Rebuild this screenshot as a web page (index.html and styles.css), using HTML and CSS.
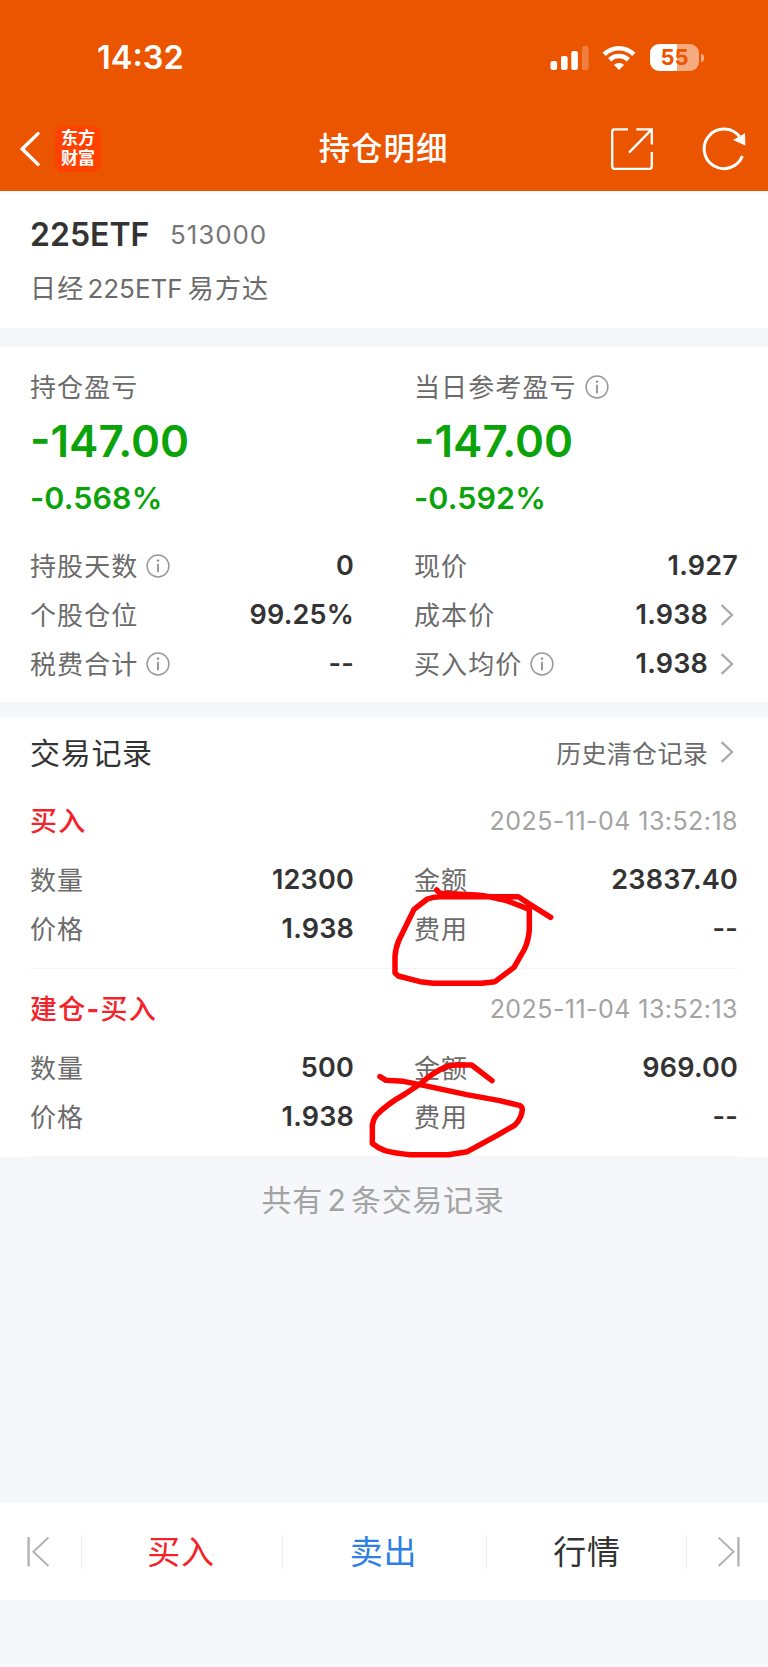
FILE: index.html
```html
<!DOCTYPE html>
<html lang="zh-CN">
<head>
<meta charset="UTF-8">
<meta name="viewport" content="width=device-width, initial-scale=1.0">
<title>持仓明细</title>
<link rel="stylesheet" href="styles.css">
</head>
<body>
<svg class="defs" width="0" height="0">
  <symbol id="info" viewBox="0 0 24 24">
    <circle cx="12" cy="12" r="10.9" fill="none" stroke="#999" stroke-width="1.5"/>
    <circle cx="12" cy="6.6" r="1.2" fill="#888"/>
    <path d="M12 9.8V18.2" stroke="#888" stroke-width="1.7"/>
  </symbol>
  <symbol id="more" viewBox="0 0 14 22">
    <path d="M1.6 1.2L12 11L1.6 20.8" fill="none" stroke="#aaa" stroke-width="2.3"/>
  </symbol>
</svg>

<div class="page">
  <header class="header">
    <div class="status">
      <span class="time">14:32</span>
      <div class="status-icons">
        <svg width="39" height="26" viewBox="0 0 39 26" fill="#fff">
          <rect x="0.5" y="16" width="6.6" height="9" rx="2"/>
          <rect x="11" y="11" width="6.6" height="14" rx="2"/>
          <rect x="21.3" y="6" width="6.6" height="19" rx="2"/>
          <rect x="32" y="1" width="6.6" height="24" rx="2" opacity=".25"/>
        </svg>
        <svg class="wifi" width="34" height="26" viewBox="0 0 34 26" fill="none" stroke="#fff" stroke-width="4.6">
          <path d="M2.2 9.4C10.5 1.1 23.5 1.1 31.8 9.4"/>
          <path d="M7.6 14.8C13 9.8 21 9.8 26.4 14.8"/>
          <path d="M17 25L12 20C15 17.4 19 17.4 22 20Z" fill="#fff" stroke="none"/>
        </svg>
        <div class="battery"><span>55</span></div>
        <i class="battery-cap"></i>
      </div>
    </div>
    <nav class="navbar">
      <div class="nav-side">
        <svg width="20" height="36" viewBox="0 0 20 36" fill="none" stroke="#fff" stroke-width="3.4" stroke-linecap="round">
          <path d="M18 2.6L2.3 18L18 33.4"/>
        </svg>
        <div class="logo">东方<br>财富</div>
      </div>
      <h1>持仓明细</h1>
      <div class="nav-side nav-right">
        <svg width="42" height="42" viewBox="0 0 42 42" fill="none" stroke="#fff" stroke-width="2.3">
          <path d="M17 1.3H3.5Q1.2 1.3 1.2 3.5V38.5Q1.2 40.8 3.5 40.8H38.5Q40.8 40.8 40.8 38.5V24"/>
          <path d="M25.3 1.3H40.8V16.5M40.2 1.9L18 24.6"/>
        </svg>
        <svg width="46" height="46" viewBox="0 0 46 46">
          <path d="M40.4 30A19.8 19.8 0 1 1 37.5 10.5" fill="none" stroke="#fff" stroke-width="3"/>
          <path d="M31 14L43 7.2L43.4 19.6Z" fill="#fff"/>
        </svg>
      </div>
    </nav>
  </header>

  <section class="stock">
    <div class="stock-line"><b>225ETF</b><span class="code">513000</span></div>
    <div class="stock-name">日经<span>225ETF</span>易方达</div>
  </section>

  <section class="summary">
    <div class="grid">
      <div class="col">
        <div class="label">持仓盈亏</div>
        <div class="profit">-147.00</div>
        <div class="rate">-0.568%</div>
      </div>
      <div class="col">
        <div class="label">当日参考盈亏<svg class="info"><use href="#info"/></svg></div>
        <div class="profit">-147.00</div>
        <div class="rate">-0.592%</div>
      </div>
    </div>
    <div class="grid rows">
      <div class="row"><span class="label">持股天数<svg class="info"><use href="#info"/></svg></span><b>0</b></div>
      <div class="row"><span class="label">现价</span><b>1.927</b></div>
      <div class="row"><span class="label">个股仓位</span><b>99.25%</b></div>
      <div class="row"><span class="label">成本价</span><b>1.938<svg class="more"><use href="#more"/></svg></b></div>
      <div class="row"><span class="label">税费合计<svg class="info"><use href="#info"/></svg></span><b>--</b></div>
      <div class="row"><span class="label">买入均价<svg class="info"><use href="#info"/></svg></span><b>1.938<svg class="more"><use href="#more"/></svg></b></div>
    </div>
  </section>

  <section class="records">
    <div class="records-head">
      <h2>交易记录</h2>
      <a class="history">历史清仓记录<svg class="more"><use href="#more"/></svg></a>
    </div>
    <div class="record">
      <div class="record-head"><strong>买入</strong><time>2025-11-04 13:52:18</time></div>
      <div class="grid rows">
        <div class="row"><span class="label">数量</span><b>12300</b></div>
        <div class="row"><span class="label">金额</span><b>23837.40</b></div>
        <div class="row"><span class="label">价格</span><b>1.938</b></div>
        <div class="row"><span class="label">费用</span><b>--</b></div>
      </div>
    </div>
    <div class="record record-open">
      <div class="record-head"><strong>建仓<b>-</b>买入</strong><time>2025-11-04 13:52:13</time></div>
      <div class="grid rows">
        <div class="row"><span class="label">数量</span><b>500</b></div>
        <div class="row"><span class="label">金额</span><b>969.00</b></div>
        <div class="row"><span class="label">价格</span><b>1.938</b></div>
        <div class="row"><span class="label">费用</span><b>--</b></div>
      </div>
    </div>
    <!-- pen marks drawn over the fee fields -->
    <svg class="marks" viewBox="0 0 1284 1020">
      <path d="M290 150L300 160L410 165Q450 169 500 182L568 208V270Q565 305 552 330L522 382L465 425L425 430H280L240 425L175 408L165 399V350Q167 322 177 300L222 208L262 177Q280 170 300 170H535L565 190L632 232"/>
      <path d="M120 710L138 721L190 724L240 734L380 764L475 781L538 796Q547 800 547 808Q546 832 525 855L470 887L382 935L325 944H210Q165 940 135 932Q112 923 97 910V855Q100 836 110 825Q140 793 195 762L240 732Q285 693 320 680Q335 675 350 675H395L456 722"/>
    </svg>
  </section>

  <p class="total">共有<span>2</span>条交易记录</p>

  <footer class="toolbar">
    <div class="step">
      <svg width="24" height="32" viewBox="0 0 24 32" fill="none" stroke="#b3b3b3" stroke-width="2">
        <path d="M2.6 1V30.4" stroke-width="2.4"/><path d="M22.4 1.6L7.4 15.8L22.4 30"/>
      </svg>
    </div>
    <div class="action buy">买入</div>
    <div class="action sell">卖出</div>
    <div class="action quote">行情</div>
    <div class="step">
      <svg width="24" height="32" viewBox="0 0 24 32" fill="none" stroke="#b3b3b3" stroke-width="2">
        <path d="M21.4 1V30.4" stroke-width="2.4"/><path d="M1.6 1.6L16.6 15.8L1.6 30"/>
      </svg>
    </div>
  </footer>
</div>
</body>
</html>
```

FILE: styles.css
```css
* {
    box-sizing: border-box;
}
body {
    margin: 0;
    background: #f6f7fa;
    color: #333;
    font-family: Inter, "Noto Sans CJK SC", sans-serif;
    font-size: 26px;
}
h1, h2, p {
    margin: 0;
}
svg {
    flex: none;
}
.defs {
    position: absolute;
}
.page {
    display: flex;
    flex-direction: column;
    width: 768px;
    height: 1667px;
}

/* header */
.header {
    height: 191px;
    background: #eb5500;
    color: #fff;
}
.status {
    display: flex;
    justify-content: space-between;
    height: 106px;
    padding: 37px 64px 0 97px;
}
.time {
    font-size: 32.5px;
    font-weight: 600;
    line-height: 41px;
}
.status-icons {
    display: flex;
    height: 41px;
    align-items: center;
}
.wifi {
    margin: 0 14px 0 13px;
}
.battery {
    width: 49px;
    height: 27px;
    border-radius: 9px;
    background: linear-gradient(90deg, #fff 55%, #f5aa80 55%);
    color: #eb5500;
    font-size: 22px;
    font-weight: 700;
    line-height: 27px;
    text-align: center;
}
.battery-cap {
    width: 3px;
    height: 8px;
    margin-left: 2px;
    border-radius: 0 4px 4px 0;
    background: #f5aa80;
}
.navbar {
    display: flex;
    align-items: center;
    justify-content: space-between;
    height: 85px;
    padding: 0 20px;
}
.nav-side {
    display: flex;
    align-items: center;
    gap: 15px;
    width: 160px;
}
.nav-right {
    justify-content: flex-end;
    gap: 49px;
}
.logo {
    width: 46px;
    height: 46px;
    padding-top: 2px;
    border-radius: 8px;
    background: #ff4200;
    font-size: 17px;
    font-weight: 700;
    line-height: 20px;
    text-align: center;
}
.navbar h1 {
    padding: 0 1px 5px 0;
    font-size: 31.5px;
    font-weight: 500;
    letter-spacing: 0.9px;
}

/* stock name */
.stock {
    height: 137px;
    padding: 21px 30px;
    background: #fff;
}
.stock-line {
    display: flex;
    align-items: center;
    height: 44px;
}
.stock-line b {
    width: 140px;
    font-size: 32px;
    font-weight: 600;
}
.code {
    color: #777;
    letter-spacing: 0.9px;
}
.stock-name {
    margin-top: 12px;
    color: #6b6b6b;
    line-height: 42px;
    letter-spacing: 1.2px;
}
.stock-name span {
    margin: 0 5px 0 3px;
    letter-spacing: 0;
}

/* profit summary */
.summary {
    height: 355px;
    margin-top: 19px;
    padding: 20px 30px;
    background: #fff;
}
.grid {
    display: grid;
    grid-template-columns: 1fr 1fr;
    column-gap: 60px;
}
.label {
    display: flex;
    align-items: center;
    height: 40px;
    padding-bottom: 3px;
    color: #6b6b6b;
    letter-spacing: 1.1px;
}
.info {
    width: 24px;
    height: 24px;
    margin: 3px 0 0 8px;
}
.profit {
    height: 66px;
    color: #0aa30a;
    font-size: 44px;
    font-weight: 600;
    line-height: 69px;
}
.rate {
    height: 48px;
    color: #0aa30a;
    font-size: 30.5px;
    font-weight: 600;
    line-height: 49px;
    letter-spacing: 0.1px;
}
.summary .rows {
    margin-top: 20px;
}
.row {
    display: flex;
    align-items: center;
    justify-content: space-between;
    height: 49px;
}
.row b {
    display: flex;
    align-items: center;
    font-size: 27px;
    font-weight: 600;
    letter-spacing: 0.2px;
}
.more {
    width: 14px;
    height: 22px;
    margin: 0 4px 0 12px;
}

/* trade records */
.records {
    position: relative;
    height: 440px;
    margin-top: 15px;
    background: #fff;
}
.records-head {
    display: flex;
    align-items: center;
    justify-content: space-between;
    height: 72px;
    padding: 0 30px;
}
.records-head h2 {
    padding-bottom: 4px;
    font-size: 30px;
    font-weight: 400;
    letter-spacing: 0.7px;
}
.history {
    display: flex;
    align-items: center;
    padding-bottom: 2px;
    color: #6b6b6b;
    font-size: 25px;
    letter-spacing: 0.3px;
}
.record {
    height: 180px;
    margin: 0 30px;
    border-bottom: 1px solid #f3f3f3;
}
.record-head {
    display: flex;
    align-items: center;
    justify-content: space-between;
    height: 66px;
    padding-bottom: 2px;
}
.record-open {
    height: 188px;
}
.record-open .record-head {
    height: 74px;
    padding: 5px 0 0;
}
.record-head strong {
    padding-bottom: 3px;
    color: #f4222a;
    font-size: 27px;
    font-weight: 500;
    letter-spacing: 1.3px;
}
.record-head strong b {
    font-weight: 700;
}
.record-head time {
    color: #a3a3a3;
    font-size: 25px;
    letter-spacing: 0.45px;
}
.marks {
    position: absolute;
    left: 340px;
    top: 123px;
    width: 428px;
    height: 340px;
    fill: none;
    stroke: #f00;
    stroke-width: 16.5;
    stroke-linecap: round;
    stroke-linejoin: round;
}
.total {
    padding: 21px 2px 0 0;
    color: #a3a3a3;
    font-size: 30px;
    line-height: 44px;
    letter-spacing: 0.7px;
    text-align: center;
}
.total span {
    margin: 0 4.5px;
}

/* bottom bar */
.toolbar {
    display: flex;
    align-items: center;
    height: 97px;
    margin-top: auto;
    margin-bottom: 67px;
    background: #fff;
}
.step {
    display: flex;
    align-items: center;
    justify-content: center;
    width: 81px;
    padding-right: 6px;
}
.step:last-child {
    padding: 0 0 0 3px;
}
.action {
    width: 201px;
    padding-right: 2px;
    border-left: 1px solid #eee;
    font-size: 33px;
    line-height: 34px;
    letter-spacing: 0.8px;
    text-align: center;
}
.buy {
    color: #f4222a;
}
.sell {
    width: 204px;
    color: #2f7fe6;
}
.quote {
    padding: 0 0 0 1px;
    border-right: 1px solid #eee;
}
```
